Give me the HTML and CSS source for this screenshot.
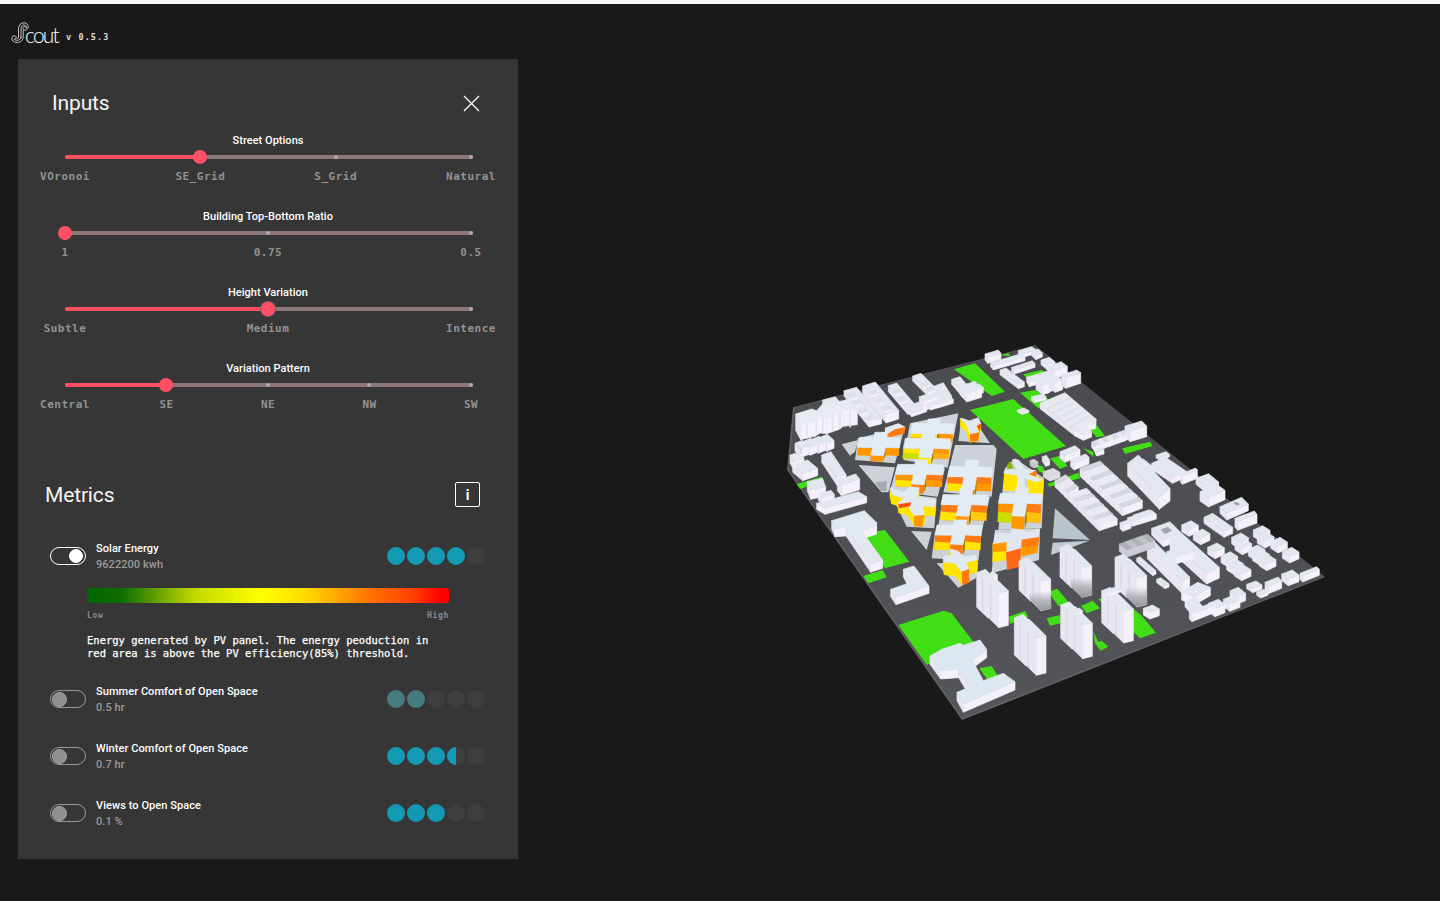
FILE: index.html
```html
<!DOCTYPE html>
<html lang="en">
<head>
<meta charset="utf-8">
<title>Scout</title>
<link rel="stylesheet" href="styles.css">
</head>
<body>
<div class="topline"></div>
<header class="brand">
  <svg class="mark" viewBox="0 0 18 22" width="18" height="22"><path d="M7.500 15V6.500C7.500 3 10 .8 13 .8s5.500 3 3.500 6c-1.200 2-4.500 2-4.500-.5 0-2 3-2 3 0M10 16V6.500C10 4.500 11.500 3 13 3s3 1.500 2.500 3M12.200 8v7c0 3-2.500 5.500-6 5.500S.8 18.500.8 16.500s2-3.500 3.500-2.500 1.200 3-.5 3M10 15c0 2-1.700 3.300-3.800 3.300S3 17.500 3 16.500M7.500 15c0 1-.5 1.500-1.500 1.500"/></svg>
  <span class="word">cout</span><span class="version">v 0.5.3</span>
</header>
<div class="main">
<aside class="panel">
  <section class="inputs">
    <div class="head"><h2>Inputs</h2>
      <svg class="close" viewBox="0 0 17 17" width="17" height="17"><path d="M1 1l15 15M16 1L1 16"/></svg></div>
    <div id="sliders"></div>
  </section>
  <section class="metrics">
    <div class="head"><h2>Metrics</h2><button class="info">i</button></div>
    <div class="metric on"><span class="toggle"></span><div class="name"><b>Solar Energy</b><span>9622200 kwh</span></div>
      <div class="dots"><i class="f"></i><i class="f"></i><i class="f"></i><i class="f"></i><i></i></div></div>
    <div class="legend"><div class="ramp"></div><div class="ends"><span>Low</span><span>High</span></div>
      <p>Energy generated by PV panel. The energy peoduction in<br>red area is above the PV efficiency(85%) threshold.</p></div>
    <div class="metric"><span class="toggle"></span><div class="name"><b>Summer Comfort of Open Space</b><span>0.5 hr</span></div>
      <div class="dots"><i class="m"></i><i class="m"></i><i></i><i></i><i></i></div></div>
    <div class="metric"><span class="toggle"></span><div class="name"><b>Winter Comfort of Open Space</b><span>0.7 hr</span></div>
      <div class="dots"><i class="f"></i><i class="f"></i><i class="f"></i><i class="h"></i><i></i></div></div>
    <div class="metric"><span class="toggle"></span><div class="name"><b>Views to Open Space</b><span>0.1 %</span></div>
      <div class="dots"><i class="f"></i><i class="f"></i><i class="f"></i><i></i><i></i></div></div>
  </section>
</aside>
<svg class="city" id="city" viewBox="518 59 922 842" width="922" height="842">
  <defs><linearGradient id="shade" x1="0" y1="0" x2="0" y2="1"><stop offset=".5" stop-color="#a2a2a9" stop-opacity="0"/><stop offset=".75" stop-color="#a2a2a9" stop-opacity=".75"/><stop offset="1" stop-color="#94959b"/></linearGradient>
  <linearGradient id="ground" x1="0" y1="0" x2="0" y2="1"><stop offset="0" stop-color="#4a4b4e"/><stop offset="1" stop-color="#535558"/></linearGradient>
  <pattern id="grass" width="400" height="12" patternUnits="userSpaceOnUse" patternTransform="rotate(22)"><rect width="400" height="12" fill="#43e016"/><path d="M0 6h400" stroke="#3ed714" stroke-width="3"/></pattern></defs>
</svg>
</div>
<script src="app.js"></script>
</body>
</html>
```
FILE: styles.css
```css
* { box-sizing: border-box; }
body { margin: 0; height: 901px; background: #191919; color: #fff; font-family: Roboto, sans-serif; overflow: hidden; display: flex; flex-direction: column; }
.topline { height: 4px; background: #fafafa; flex: none; }
.brand { height: 55px; flex: none; display: flex; padding: 18px 0 0 11px; }
.mark { fill: none; stroke: #d5d5d5; stroke-width: .9; overflow: visible; }
.word { font: 300 21px/26px Lato, sans-serif; letter-spacing: -1.8px; width: 35px; margin-left: -4px; }
.version { font: bold 8.5px/30px "DejaVu Sans Mono", monospace; letter-spacing: 1.1px; margin-left: 6px; color: #ddd; }
.main { display: flex; }
.panel { width: 500px; height: 800px; margin-left: 18px; background: #363636; flex: none; }
.city { display: block; flex: none; }
.inputs { height: 396px; margin: 0 20px; border-bottom: 1px solid #313131; }
.head { display: flex; justify-content: space-between; align-items: center; }
h2 { margin: 0; font-size: 21px; line-height: 26px; font-weight: 400; letter-spacing: -.15px; color: #f4f4f4; }
.inputs .head { padding: 31px 18px 0 14px; }
.close { fill: none; stroke: #fff; stroke-width: 1.2; }
.slider { height: 76px; padding: 0 9px; font-size: 11px; }
#sliders { padding-top: 17px; }
.slider h3 { margin: 0; text-align: center; font-size: 11px; line-height: 16px; font-weight: 500; letter-spacing: .03px; }
.track { height: 4px; margin: 6px -3px 0 18px; width: 408px; background: #8b7777; border-radius: 2px; position: relative; }
.fill { height: 4px; background: #ff4f62; border-radius: 2px; }
.tick { position: absolute; top: 0; width: 4px; height: 4px; margin-left: -2px; border-radius: 2px; background: #b5a8a8; }
.thumb { position: absolute; top: -5px; width: 14px; height: 14px; margin-left: -7px; border-radius: 50%; background: #ff5064; }
.focus { box-shadow: 0 0 0 1px #85596a; }
.marks { position: relative; width: 406px; margin: 10px 0 0 18px; font: bold 11px/16px "DejaVu Sans Mono", monospace; letter-spacing: .5px; color: #929292; }
.marks span { position: absolute; transform: translateX(-50%); }
.metrics { padding: 27px 33px 0 32px; }
.metrics .head { padding: 0 5px 0 0; margin-left: -5px; }
.info { width: 25px; height: 25px; margin-top: -1px; border: 1.5px solid #fff; border-radius: 2px; background: none; color: #fff; font: bold 14px/20px Roboto, sans-serif; padding: 0; }
.metric { display: flex; align-items: center; height: 32px; margin-bottom: 25px; }
.metrics .head + .metric { margin: 32px 0 16px; }
.toggle { width: 36px; height: 18px; border: 1px solid #999; border-radius: 9px; display: flex; align-items: center; padding: 0 2px 0 1px; }
.toggle::after { content: ""; width: 13px; height: 13px; border-radius: 50%; background: #8f8f8f; border: 1px solid #a5a5a5; }
.on .toggle { border: 1.5px solid #fff; justify-content: flex-end; }
.on .toggle::after { width: 12px; height: 12px; background: #fff; border-color: #fff; }
.name { margin-left: 10px; padding-top: 2px; flex: 1; font-size: 11px; line-height: 16px; font-weight: 500; letter-spacing: .06px; }
.name b { font-weight: 500; display: block; }
.name span { color: #9b9b9b; display: block; }
.dots { display: flex; gap: 2px; }
.dots i { width: 18px; height: 18px; border-radius: 50%; background: #3e3e3e; }
.dots .f { background: #1299b4; }
.dots .m { background: #467b80; }
.dots .h { background: linear-gradient(90deg, #1299b4 50%, #3e3e3e 50%); }
.legend { padding: 0 36px 0 37px; height: 79px; margin-bottom: 16px; }
.ramp { height: 15px; border-radius: 3px; background: linear-gradient(90deg, #006500, #107000 10%, #c5d900 30%, #ff0 48%, #ffdc00 60%, #ff7300 78%, #ff4000 90%, #f00 98%); }
.ends { display: flex; justify-content: space-between; font: bold 8px/14px "DejaVu Sans Mono", monospace; letter-spacing: .7px; color: #8c8c8c; padding-top: 6px; }
.legend p { margin: 11px 0 0; font: 10.5px/13px "DejaVu Sans Mono", monospace; white-space: nowrap; -webkit-text-stroke: .25px #fff; }
```
FILE: app.js
```js
const sliders = [
  ["Street Options", ["VOronoi", "SE_Grid", "S_Grid", "Natural"], 1],
  ["Building Top-Bottom Ratio", ["1", "0.75", "0.5"], 0],
  ["Height Variation", ["Subtle", "Medium", "Intence"], 1],
  ["Variation Pattern", ["Central", "SE", "NE", "NW", "SW"], 1]
];
document.getElementById("sliders").innerHTML = sliders.map(([t, m, v]) => {
  const at = i => i * 100 / (m.length - 1);
  return `<div class="slider"><h3>${t}</h3><div class="track"><div class="fill" style="width:${at(v)}%"></div>` +
    m.map((_, i) => i > v ? `<span class="tick" style="left:${at(i) * .995}%"></span>` : "").join("") +
    `<span class="thumb${t[0] === "H" ? " focus" : ""}" style="left:${Math.round(at(v) * 4.055)}px"></span></div><div class="marks">` +
    m.map((s, i) => `<span style="left:${at(i)}%">${s}</span>`).join("") + `</div></div>`;
}).join("");

const NS = "http://www.w3.org/2000/svg", city = document.getElementById("city");
let g;
function district(x, y) {
  g = document.createElementNS(NS, "g");
  g.setAttribute("transform", `translate(${x} ${y}) scale(.33333)`);
  city.appendChild(g);
}
function poly(p, fill, edge = 0) {
  const e = document.createElementNS(NS, "polygon");
  e.setAttribute("points", p.join(" "));
  e.setAttribute("fill", fill);
  if (edge) {
    e.setAttribute("stroke", fill);
    e.setAttribute("stroke-width", edge);
    e.setAttribute("stroke-linejoin", "round");
  }
  g.appendChild(e);
}
// Extrudes a clockwise roof outline downwards by h.
function solid(p, h, roof = "#e3e7ef", side = "#f4f1fa") {
  const edges = p.map((a, i) => [a, p[(i + 1) % p.length]]).filter(([a, b]) => b[0] < a[0] || (b[0] === a[0] && b[1] < a[1]));
  edges.sort((a, b) => a[0][1] + a[1][1] - b[0][1] - b[1][1]);
  edges.forEach(([a, b]) => {
    const steep = Math.abs(b[1] - a[1]) > Math.abs(b[0] - a[0]) * .6 && b[1] < a[1];
    poly([a, b, [b[0], b[1] + h], [a[0], a[1] + h]], side === "#f4f1fa" && steep ? "#e9e6f1" : side, 2);
  });
  poly(p, roof, 2);
}
function box(x, y, ax, ay, bx, by, h, roof, side) {
  solid([[x, y], [x + bx, y + by], [x + ax + bx, y + ay + by], [x + ax, y + ay]], h, roof, side);
}
const boxes = a => a.forEach(b => box(...b));
const greens = a => a.forEach(p => poly(p, "url(#grass)"));

district(0, 0);
poly([[2379,1222],[3105,1036],[3975,1731],[2886,2160],[2361,1410]], "#5f6164");
poly([[2385,1222],[3105,1038],[3972,1729],[2887,2153],[2366,1410]], "url(#ground)");

district(960, 340);
greens([[[-18,88],[45,70],[135,155],[95,168],[20,115]],[[30,210],[160,177],[318,318],[190,357]],[[118,46],[145,40],[150,48]],[[190,103],[245,90],[260,100],[205,120]],[[180,158],[225,150],[270,180],[235,205]],[[380,258],[410,255],[435,288],[410,292]],[[487,325],[570,305],[578,318],[495,342]],[[270,355],[300,348],[322,378],[300,387]],[[262,432],[355,398],[360,415],[268,440]],[[370,325],[400,335],[400,350]],[[225,372],[250,380],[255,400],[238,395]]]);
boxes([[175,32,15,10,40,-12,10],[215,35,12,12,20,-8,12],[75,42,8,10,40,-12,18],[92,68,8,10,95,-28,12],[155,82,8,8,62,-20,12],[120,90,55,42,18,-6,14],[243,60,17,14,25,-8,14],[262,80,18,14,42,-15,24],[200,112,8,14,60,-18,14],[245,118,20,12,35,-10,26],[228,122,20,15,20,-6,27],[268,115,18,12,22,-8,30],[305,105,12,8,45,-15,32],[215,170,8,8,35,-8,10],[172,210,15,8,20,-6,5]]);
solid([[240,190],[315,158],[408,237],[405,250],[378,255],[395,275],[370,285],[345,272]], 16, "#e9eaf1");
for (let i = 1; i < 6; i++) poly([[240+i*17,190+i*14],[315+i*15,160+i*13],[318+i*15,163+i*13],[243+i*17,195+i*14]], "#dcdfe6");
for (let i = 6; i >= 0; i--) box(395+i*14,306-i*5,10,13,14,-6,16,i%2?"#e9eaf2":"#d9dce4");
boxes([[495,258,15,15,50,-15,32],[405,328,5,8,22,-6,12],[300,335,15,12,45,-18,20],[332,360,10,10,45,-18,20],[210,362,12,8,12,-4,14,"#d0d4da","#c4c8cf"],[247,350,10,15,12,-4,14],[250,395,20,12,30,-10,16,"#d6dadf","#dcdde4"]]);
for (let i = 0; i < 9; i++) box(360+i*14.5,385+i*13.5,11,10,60,-22,24,i%2?"#e9eaf2":"#d3d7e0");
for (let i = 0; i < 10; i++) box(285+i*13.5,422+i*13.5,11,10,i<3?32:54,-18,19,i%2?"#e9eaf2":"#d6d9e1");
boxes([[480,548,8,8,25,-9,18],[503,533,14,12,72,-22,14]]);

district(780, 340);
greens([[[50,432],[125,410],[133,422],[60,447]]]);
box(128,180,10,12,38,-10,20);
solid([[47,222],[95,207],[110,212],[130,190],[175,185],[205,178],[232,195],[232,205],[190,210],[175,220],[140,232],[120,230],[105,240],[62,250]], 49, "#e9ebf2");
[78,106,126,155,178,208].forEach((x,i) => poly([[x,250-i*8],[x+5,248-i*8],[x+5,287-i*5],[x,288-i*5]], "#e4e3ed"));
boxes([[192,152,75,93,38,-10,16],[248,138,70,85,38,-12,26],[325,137,58,68,25,-8,18],[375,200,20,20,45,-15,10],[398,108,60,60,25,-8,15],[450,143,25,40,40,-15,20],[418,170,12,14,45,-15,28],[440,190,12,8,68,-20,12],[515,118,30,35,25,-8,15],[540,138,20,22,45,-14,26],[580,138,12,10,18,-6,16]]);
[[200,165],[215,185],[235,210],[255,232],[265,155],[285,180],[305,202],[337,152],[352,175],[420,130],[435,145]].forEach(([x,y])=>box(x,y,10,10,20,-6,7,"#dde0e8"));
for (let i = 3; i >= 0; i--) {
  box(45+i*25,310-i*6,20,18,22,-9,24);
  poly([[45+i*25,310-i*6],[65+i*25,328-i*6],[65+i*25,350-i*6],[61+i*25,346-i*6],[61+i*25,331-i*6]], "#cdd0da");
}
boxes([[30,345,12,20,30,-10,25],[38,375,30,25,45,-15,22],[125,345,45,68,28,-10,22],[172,420,12,15,55,-18,32],[82,425,10,25,45,-10,28],[115,463,10,12,38,-12,18],[110,490,25,15,125,-35,18]]);

district(835, 405);
[[[20,118],[70,105],[60,140],[45,152]],[[68,100],[210,65],[180,175],[60,165]],[[225,55],[370,25],[338,188],[205,165]],[[70,180],[180,187],[160,262],[140,262]],[[185,185],[330,190],[308,275],[165,258]],[[165,262],[305,278],[298,370],[215,365]],[[228,378],[290,380],[275,435]],[[380,38],[425,55],[465,115],[370,108]],[[360,120],[475,120],[485,132],[470,275],[325,262]],[[325,268],[465,275],[440,380],[308,375]],[[300,380],[440,385],[430,468],[290,460]],[[305,475],[430,470],[425,518],[370,548]],[[510,190],[540,160],[627,220],[620,370],[490,375]],[[480,375],[615,370],[612,465],[470,505]]].forEach(p=>poly(p,"#ccd2d8"));
poly([[120,232],[155,228],[155,257],[140,259]], "#a4abb2");
// A cross-shaped block: left, right, top, bottom extents plus facade colours.
function cross(l, r, t, b, cy, h, cl, cb, cr, lean = 6) {
  const cx = (l + r) / 2, w = 19, v = 15;
  const face = (x1, x2, y, k, c) => {
    poly([[x1,y],[x2,y+2],[x2-2,y+k+2],[x1-2,y+k]], c[0]);
    if (c[1]) poly([[x1-1,y+k*.45],[x2-1,y+k*.5+2],[x2-2,y+k+2],[x1-2,y+k]], c[1]);
  };
  face(l, cx-w, cy+v, h, cl);
  face(cx+w, r-4, cy+v, h, cr);
  poly([[cx+w,cy+v],[cx+w-lean,b],[cx+w-lean,b+h*.75],[cx+w,cy+v+h]], "#a68100");
  face(cx-w-lean, cx+w-lean, b, h*.75, cb);
  poly([[cx-w+lean,t],[cx+w+lean,t],[cx+w+3,cy-v],[r,cy-v+2],[r-4,cy+v+2],[cx+w,cy+v],[cx+w-lean,b+2],[cx-w-lean,b],[cx-w,cy+v],[l,cy+v],[l+6,cy-v],[cx-w+4,cy-v]], "#e3ebf3", 2);
}
const O="#ff9800", Y="#ffe500", D="#ff7a10", L="#c9df00";
poly([[148,72],[190,58],[212,67],[208,86],[180,92],[160,99]], D);
poly([[150,68],[190,55],[212,66],[180,73],[158,86],[150,83]], "#e1e9f1");
cross(228,358,42,86,70,24,[Y,O],[Y],[O,O]);
cross(68,197,82,150,112,24,[O],[O],[O]);
cross(205,347,86,156,115,30,[Y,L],[Y],[O,"#ffac16"]);
solid([[376,40],[402,48],[430,38],[437,55],[421,65],[433,82],[405,88],[394,58]],24,"#e1e9f1",Y);
poly([[405,88],[433,82],[430,108],[405,110]],D);poly([[426,62],[438,57],[434,80]],"#ff4a16");
cross(182,327,165,237,193,36,[O,Y],[D],[D,O]);
cross(338,473,165,252,200,42,[D,Y],[D],[D,O]);
solid([[165,248],[207,262],[225,245],[252,248],[248,276],[302,285],[298,305],[262,303],[268,330],[237,332],[218,302],[190,295],[206,280],[170,268]],28,"#e1e9f1",Y);
poly([[190,298],[228,292],[226,304],[192,310]],"#ff4d14");poly([[237,332],[268,330],[262,366],[237,364]],O);
cross(318,460,250,332,284,46,[D,Y],[O],[D,"#ffcb12"]);
cross(300,442,345,417,375,44,[D,Y],[D],[D,Y]);
solid([[325,455],[350,450],[345,432],[368,438],[388,455],[423,450],[426,464],[392,473],[402,492],[380,500],[360,475],[328,472]],37,"#e1e9f1",Y);
poly([[380,500],[402,492],[404,532],[382,541]],D);
poly([[508,195],[548,205],[545,258],[504,257]],Y);poly([[575,205],[627,222],[622,278],[580,265]],Y);poly([[582,207],[607,196],[603,215]],D);
poly([[530,163],[552,164],[569,192],[605,196],[579,207],[626,225],[600,231],[567,218],[571,247],[545,247],[549,213],[505,205],[510,194],[546,194]],"#e1e9f1");
poly([[517,178],[527,168],[535,190],[517,192]],"#8fae00");
cross(490,622,248,332,280,56,[O,L],[O],[D,"#ffc10b"]);
poly([[473,415],[515,410],[513,465],[472,472]],Y);poly([[473,415],[515,410],[515,438],[473,441]],O);
poly([[513,440],[558,428],[556,485],[516,495]],"#ff6712");
poly([[560,402],[611,393],[608,443],[559,455]],O);poly([[560,402],[611,393],[610,420],[560,427]],D);
poly([[480,382],[525,385],[530,370],[570,374],[570,382],[614,372],[611,396],[560,404],[557,430],[515,442],[515,411],[474,417]],"#dfe6ef");

district(1140, 410);
boxes([[-5,155,35,28,15,-8,12],[-37,160,95,100,32,-25,38],[48,135,10,8,30,-10,8],[35,160,62,42,42,-18,18],[122,192,5,6,45,-18,25],[168,205,30,25,38,-14,18],[180,245,25,18,50,-22,28],[240,290,20,20,65,-28,20],[285,325,8,10,58,-22,26],[192,322,60,42,26,-12,18],[-20,315,18,12,48,-16,14]]);
poly([[280,279],[290,275],[300,283],[290,287]],"#9da0a8");
[[340,360],[352,380],[392,395],[427,425],[275,382],[285,400],[325,418],[338,432],[358,448],[125,345],[160,370],[203,412],[243,438],[260,460],[283,478]].forEach(([x,y])=>box(x,y,22,14,28,-13,20));
box(35,355,35,35,55,-20,20);
poly([[62,359],[83,350],[96,362],[75,372]],"#a2a5ad");
boxes([[90,390,110,100,38,-18,32],[80,425,25,18,55,-18,20],[22,408,105,105,22,-12,38],[125,545,38,15,48,-28,25],[-10,445,48,42,10,-5,10],[50,508,25,18,12,-5,10],[425,492,20,15,32,-12,20],[375,517,10,12,40,-16,22],[480,490,8,8,50,-20,18],[320,523,18,12,28,-10,13],[350,546,12,8,22,-8,10],[270,542,22,18,25,-10,22],[250,568,20,14,30,-12,22],[205,580,20,15,30,-12,25],[135,572,25,30,30,-10,18],[148,605,8,8,70,-28,22]]);

district(820, 500);
greens([[[130,100],[195,90],[268,185],[195,205]],[[130,228],[188,210],[200,232],[145,250]],[[235,375],[370,332],[395,340],[460,425],[320,495]],[[478,505],[515,498],[538,535],[505,543]]]);
solid([[35,62],[133,32],[170,68],[168,78],[125,92],[188,180],[152,192],[78,83],[45,85]], 25, "#e1e8f0");
solid([[250,208],[282,198],[327,258],[228,292],[212,268],[270,248]], 22, "#e1e8f0");
solid([[330,468],[365,448],[420,430],[430,436],[480,420],[500,448],[457,480],[490,542],[550,520],[585,545],[430,612],[411,577],[448,562],[416,508],[362,512]], 25, "#dde7f0");

district(970, 500);
greens([[[235,275],[262,266],[300,312],[265,318]],[[115,350],[165,333],[175,350],[120,372]],[[230,355],[270,345],[272,370],[240,377]],[[333,318],[368,302],[390,325],[350,340]],[[370,395],[385,425],[395,422],[415,440],[392,452],[375,430]],[[385,298],[440,285],[515,347],[558,398],[510,415]]]);
poly([[255,25],[360,120],[248,115]],"#b9c4cb");poly([[248,128],[358,122],[243,165]],"#c1cbd1");
for (let i = 4; i >= 0; i--) box(448+i*17,132-i*6,22,18,16,-6,22,i%2?"#bfc1c6":"#aeb1b7","#cdccd4");
boxes([[520,325,20,12,28,-10,20]]);
function tower(x, y, h, shaded) {
  box(x, y, 34, 32, 26, -10, h);
  box(x+16, y+12, 50, 49, 29, -7, h);
  [16,40].forEach(d => poly([[x+d,y+d*.95],[x+d+4,y+d*.95+4],[x+d+4,y+d*.95+h],[x+d,y+d*.95+h-4]], "#dad8e3"));
  if (shaded) poly([[x+32,y+30],[x+66,y+62],[x+96,y+55],[x+96,y+54+h],[x+66,y+61+h],[x+32,y+28+h]], "url(#shade)");
}
tower(270,143,88,true); tower(435,172,88,true); tower(147,183,88,true);
tower(20,218,104); tower(395,272,96); tower(272,315,100); tower(133,353,112);
boxes([[62,218,12,10,8,-4,15],[310,330,10,8,18,-6,6],[400,272,12,8,40,-12,8]]);
```
